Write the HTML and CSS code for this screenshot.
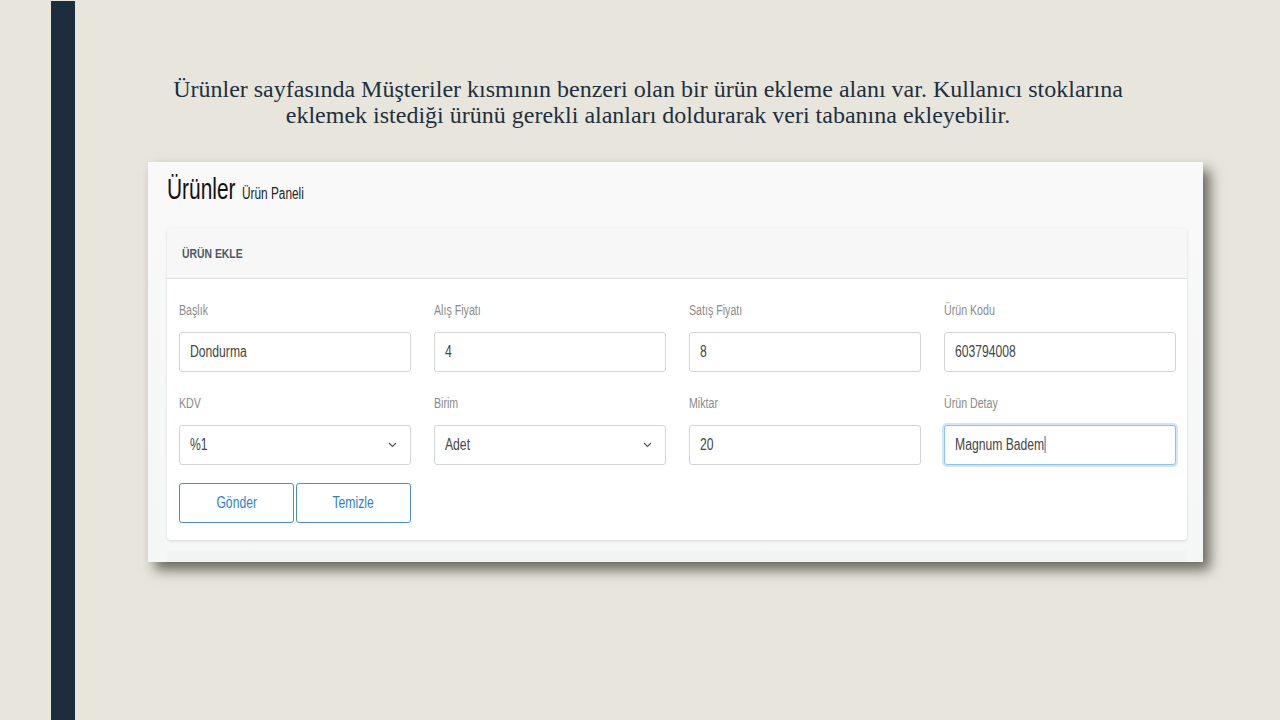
FILE: index.html
```html
<!DOCTYPE html>
<html lang="tr">
<head>
<meta charset="utf-8">
<title>Ürünler</title>
<link rel="stylesheet" href="styles.css">
</head>
<body>
<div class="slide">
  <div class="accent"></div>
  <main class="content">
    <p class="caption">Ürünler sayfasında Müşteriler kısmının benzeri olan bir ürün ekleme alanı var. Kullanıcı stoklarına<br>eklemek istediği ürünü gerekli alanları doldurarak veri tabanına ekleyebilir.</p>
    <section class="shot">
      <h1 class="page-title"><span class="sq">Ürünler</span> <small class="sq">Ürün Paneli</small></h1>
      <div class="card">
        <div class="card-head"><span class="sq">ÜRÜN EKLE</span></div>
        <div class="card-body">
          <div class="grid">
            <div class="field"><label class="sq">Başlık</label><div class="input"><span class="sq">Dondurma</span></div></div>
            <div class="field"><label class="sq">Alış Fiyatı</label><div class="input"><span class="sq">4</span></div></div>
            <div class="field"><label class="sq">Satış Fiyatı</label><div class="input"><span class="sq">8</span></div></div>
            <div class="field"><label class="sq">Ürün Kodu</label><div class="input"><span class="sq">603794008</span></div></div>
            <div class="field"><label class="sq">KDV</label><div class="input select"><span class="sq">%1</span><svg class="chev" width="9" height="6" viewBox="0 0 9 6"><path d="M1 1l3.5 3.5L8 1" fill="none" stroke="#555" stroke-width="1.2"/></svg></div></div>
            <div class="field"><label class="sq">Birim</label><div class="input select"><span class="sq">Adet</span><svg class="chev" width="9" height="6" viewBox="0 0 9 6"><path d="M1 1l3.5 3.5L8 1" fill="none" stroke="#555" stroke-width="1.2"/></svg></div></div>
            <div class="field"><label class="sq">Miktar</label><div class="input"><span class="sq">20</span></div></div>
            <div class="field"><label class="sq">Ürün Detay</label><div class="input focus"><span class="sq">Magnum Badem<i class="caret"></i></span></div></div>
          </div>
          <div class="buttons">
            <button class="btn"><span class="sq">Gönder</span></button>
            <button class="btn"><span class="sq">Temizle</span></button>
          </div>
        </div>
      </div>
      <div class="next-card"></div>
    </section>
  </main>
</div>
</body>
</html>
```
FILE: styles.css
```css
html, body { margin: 0; padding: 0; }
body { background: #e8e6dc; width: 1280px; height: 720px; overflow: hidden; }
.slide { display: flex; height: 720px; }
.accent { width: 24px; margin-left: 51px; margin-top: 1px; background: #1c2e3e; }
.content { flex: 1; display: flex; flex-direction: column; padding-left: 73px; }
.caption {
  margin: 76px 0 0 0;
  width: 1000px;
  text-align: center;
  font-family: "Liberation Serif", "Times New Roman", serif;
  font-size: 24px;
  line-height: 26px;
  color: #1e2f3f;
}
.sq { display: inline-block; transform: scaleX(0.76); transform-origin: left center; white-space: nowrap; }
.shot {
  margin-top: 34px;
  width: 1055px;
  height: 400px;
  box-sizing: border-box;
  background: linear-gradient(#f9f9f9, #f5f6f6);
  box-shadow: 7px 8px 12px rgba(30, 28, 20, 0.62);
  padding: 0 16px 0 19px;
  font-family: "Liberation Sans", Arial, sans-serif;
  overflow: hidden;
}
.page-title { margin: 11px 0 0 0; font-weight: normal; font-size: 29px; line-height: 32px; color: #111; height: 33px; }
.page-title .sq { transform: scaleX(0.72); }
.page-title small { font-size: 16px; color: #222; margin-left: -28px; transform: scaleX(0.74) !important; }
.card { margin-top: 22px; background: #fff; border-radius: 4px; box-shadow: 0 1px 3px rgba(0,0,0,0.12); }
.card-head { height: 50px; background: #f7f7f7; border-bottom: 1px solid #dcdcdc; border-radius: 4px 4px 0 0; padding-left: 15px; display: flex; align-items: center; }
.card-head .sq { font-weight: bold; font-size: 13.5px; color: #4d5766; transform: scaleX(0.77); }
.card-body { padding: 23px 12px 17px 12px; }
.grid { display: grid; grid-template-columns: repeat(4, 232px); column-gap: 23px; row-gap: 23px; }
.field { display: flex; flex-direction: column; }
.field label { font-size: 14px; line-height: 16px; color: #8a8a8a; height: 16px; margin-bottom: 14px; }
.input { height: 40px; box-sizing: border-box; border: 1px solid #d4d4d4; border-radius: 3px; background: #fff; display: flex; align-items: center; padding: 0 10px; font-size: 16px; color: #454545; }
.select { justify-content: space-between; padding-right: 13px; }
.chev { flex: none; }
.focus { border-color: #8ec2f0; box-shadow: 0 0 0 2px #cfe6fb; }
.caret { display: inline-block; width: 1px; height: 17px; background: #333; vertical-align: -3px; margin-left: 1px; }
.buttons { display: flex; gap: 2px; margin-top: 18px; }
.btn { width: 115px; height: 40px; background: #fff; border: 1px solid #4a90c8; border-radius: 3px; color: #2f7fc6; font-family: "Liberation Sans", Arial, sans-serif; font-size: 16px; padding: 0; }
.btn .sq { transform-origin: center center; }
.next-card { margin-top: 10px; height: 20px; background: #f2f3f3; border-radius: 4px; }
```
